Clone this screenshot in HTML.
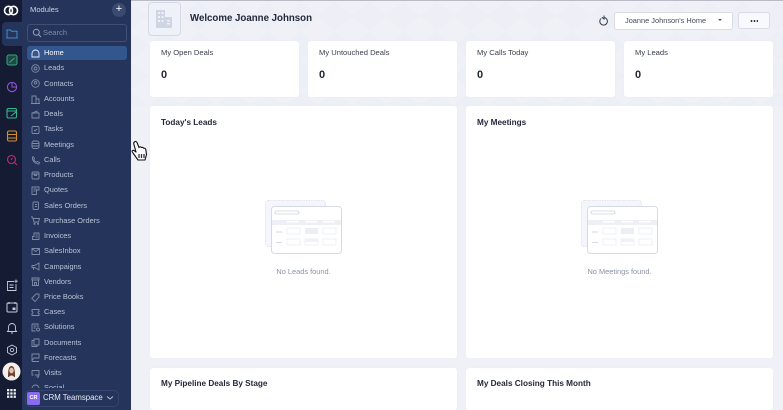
<!DOCTYPE html>
<html><head><meta charset="utf-8"><style>
*{box-sizing:border-box}
html,body{margin:0;padding:0}
html{background:#eff1f7}
body{width:783px;height:410px;overflow:hidden;position:relative;background:#eff1f7;font-family:"Liberation Sans",sans-serif;color:#1d2233;filter:blur(.35px)}
.a{position:absolute}
#rail{left:0;top:0;width:22px;height:410px;background:#141b33}
#side{left:22px;top:0;width:109px;height:410px;background:#24345a;overflow:hidden}
.it{position:absolute;left:44px;font-size:7.4px;color:#b9c2d6;white-space:nowrap;line-height:10px}
.ic{position:absolute;left:31px;width:9px;height:9px}
.ic *{fill:none;stroke:#7f8ca8;stroke-width:.9}
.card{position:absolute;background:#fff;border-radius:3px;box-shadow:0 0 1px #e6e9f1}
.t{position:absolute;font-size:7.6px;color:#3a3f4e;left:11px;top:7px;white-space:nowrap;line-height:10px}
.n{position:absolute;left:11px;top:28px;font-size:11px;font-weight:bold;color:#222736;line-height:12px}
.h{position:absolute;left:11px;top:11px;font-size:8.2px;font-weight:bold;color:#23283a;white-space:nowrap;line-height:11px}
.e{position:absolute;font-size:7.4px;color:#8a92a8;white-space:nowrap;line-height:10px;left:0;right:0;text-align:center;top:160px}
</style></head><body>
<div class="a" style="left:131px;top:0;width:652px;height:1px;background:#b9bcc4"></div>
<svg class="a" style="left:131px;top:1px" width="652" height="105"><defs><pattern id="p" width="34" height="30" patternUnits="userSpaceOnUse"><path d="M0 0L17 15L0 30ZM34 0L17 15L34 30Z" fill="#e9ecf4"/></pattern></defs><rect width="652" height="105" fill="url(#p)" opacity=".45"/></svg>
<div class="a" id="rail"></div>
<div class="a" id="side"></div>
<div class="a" style="left:2px;top:22px;width:20px;height:24px;background:#24345a;border-radius:4px 0 0 4px"></div>

<svg class="a" style="left:2px;top:3px" width="18" height="15" viewBox="0 0 18 15"><g fill="none" stroke="#fff" stroke-width="1.6"><ellipse cx="6.500" cy="7.500" rx="4" ry="4.200"/><ellipse cx="11.500" cy="7.500" rx="4" ry="4.200"/></g></svg>
<svg class="a" style="left:6px;top:28px" width="12" height="11" viewBox="0 0 12 11"><path d="M1 2h3.500l1 1.300H11V10H1Z" fill="none" stroke="#3f8fd0" stroke-width="1"/></svg>
<svg class="a" style="left:6px;top:54px" width="12" height="12" viewBox="0 0 12 12"><rect x="1" y="1" width="10" height="10" rx="2" fill="#1d4a45" stroke="#36a87e" stroke-width="1"/><path d="M3.500 8.500L8.500 4" stroke="#36a87e"/></svg>
<svg class="a" style="left:6px;top:81px" width="12" height="12" viewBox="0 0 12 12"><circle cx="6" cy="6" r="4.600" fill="none" stroke="#9450d8" stroke-width="1.100"/><path d="M6 1.500V6H10.500" fill="none" stroke="#9450d8" stroke-width="1"/></svg>
<svg class="a" style="left:6px;top:107px" width="12" height="12" viewBox="0 0 12 12"><rect x="1" y="1.500" width="9.500" height="9.500" rx="1.500" fill="none" stroke="#38b78d" stroke-width="1.100"/><path d="M1 4h9.500M5 9l5-4" stroke="#38b78d" stroke-width="1.100"/></svg>
<svg class="a" style="left:6px;top:130px" width="12" height="12" viewBox="0 0 12 12"><rect x="1.500" y="1" width="9" height="10" rx="1.500" fill="none" stroke="#cf9034" stroke-width="1.100"/><path d="M1.500 4.500h9M1.500 8h9" stroke="#cf9034" stroke-width="1"/></svg>
<svg class="a" style="left:6px;top:154px" width="12" height="12" viewBox="0 0 12 12"><circle cx="5.500" cy="5.500" r="4" fill="none" stroke="#c42f70" stroke-width="1.100"/><path d="M8.500 8.500L11 11M5 6l1.500-2" stroke="#c42f70" stroke-width="1"/></svg>

<svg class="a" style="left:6px;top:279px" width="12" height="13" viewBox="0 0 12 13"><path d="M8 2.500H1.500V11.500H10V5M3.500 6h4M3.500 8.500h4M10 .5v3.500M8.300 2.200h3.500" fill="none" stroke="#c6ccda" stroke-width=".9"/></svg>
<svg class="a" style="left:6px;top:301px" width="12" height="12" viewBox="0 0 12 12"><rect x="1" y="2" width="10" height="9" rx="1" fill="none" stroke="#c6ccda" stroke-width="1"/><path d="M3 1v2M9 1v2" stroke="#c6ccda"/><rect x="6.500" y="6.500" width="3" height="2.500" fill="#c6ccda"/></svg>
<svg class="a" style="left:6px;top:322px" width="12" height="13" viewBox="0 0 12 13"><path d="M6 1.500a3.500 3.500 0 0 0-3.500 3.500V8L1.500 9.500h9L9.500 8V5A3.500 3.500 0 0 0 6 1.500ZM5 11h2" fill="none" stroke="#c6ccda" stroke-width=".9"/></svg>
<svg class="a" style="left:6px;top:344px" width="12" height="12" viewBox="0 0 12 12"><path d="M6 1l4.500 2.500v5L6 11 1.500 8.500v-5Z" fill="none" stroke="#c6ccda" stroke-width=".9"/><circle cx="6" cy="6" r="1.700" fill="none" stroke="#c6ccda" stroke-width=".9"/></svg>
<svg class="a" style="left:2px;top:362px" width="19" height="19" viewBox="0 0 19 19"><circle cx="9.500" cy="9.500" r="9" fill="#f3efec"/><path d="M6 15c0-5 .2-11 3.500-11S13 10 13 15Z" fill="#6a4030"/><ellipse cx="9.500" cy="8.500" rx="2.200" ry="2.900" fill="#e8c2ac"/><path d="M6 17.500c.5-3 2-4 3.500-4s3 1 3.500 4Z" fill="#ece6e6"/></svg>
<svg class="a" style="left:6px;top:388px" width="11" height="11" viewBox="0 0 11 11" fill="#e6e9f1"><rect x="1" y="1" width="2.300" height="2.300"/><rect x="4.300" y="1" width="2.300" height="2.300"/><rect x="7.600" y="1" width="2.300" height="2.300"/><rect x="1" y="4.300" width="2.300" height="2.300"/><rect x="4.300" y="4.300" width="2.300" height="2.300"/><rect x="7.600" y="4.300" width="2.300" height="2.300"/><rect x="1" y="7.600" width="2.300" height="2.300"/><rect x="4.300" y="7.600" width="2.300" height="2.300"/><rect x="7.600" y="7.600" width="2.300" height="2.300"/></svg>

<div class="a" style="left:30px;top:4px;font-size:7.600px;color:#cdd3e2;line-height:11px">Modules</div>
<div class="a" style="left:112px;top:3px;width:14px;height:14px;border-radius:50%;background:#3a4a70;color:#fff;font-size:11px;line-height:13px;text-align:center">+</div>
<div class="a" style="left:27px;top:24px;width:100px;height:18px;border:1px solid #3f4f76;border-radius:3px;background:#24345a"></div>
<svg class="a" style="left:32px;top:28px" width="10" height="10" viewBox="0 0 10 10"><circle cx="4.300" cy="4.300" r="3" fill="none" stroke="#9aa4bc"/><path d="M6.500 6.500L9 9" stroke="#9aa4bc"/></svg>
<div class="a" style="left:43px;top:28px;font-size:7.600px;color:#7f8ba6;line-height:10px">Search</div>
<div class="a" style="left:27px;top:46px;width:100px;height:14px;background:#34568f;border-radius:3px"></div>

<svg class="ic" style="top:48.500px" viewBox="0 0 9 9"><path d="M1 8V4.500a3.500 3.500 0 0 1 7 0V8Z" style="stroke:#e8ecf4"/></svg>
<svg class="ic" style="top:63.500px" viewBox="0 0 9 9"><circle cx="4.500" cy="4.500" r="3.800"/><circle cx="4.500" cy="4.500" r="1.500"/></svg>
<svg class="ic" style="top:79px" viewBox="0 0 9 9"><circle cx="4.500" cy="4.500" r="3.800"/><circle cx="4.500" cy="3.800" r="1.300"/></svg>
<svg class="ic" style="top:94.500px" viewBox="0 0 9 9"><path d="M1 8.500V1h4v7.500M5 4h3v4.500M0 8.500h9"/></svg>
<svg class="ic" style="top:109.500px" viewBox="0 0 9 9"><path d="M1 3h7v5H1ZM1 3l5-2v2"/></svg>
<svg class="ic" style="top:124.500px" viewBox="0 0 9 9"><rect x="1" y="1.500" width="7" height="7" rx="1"/><path d="M3 5l1 1 2-2"/></svg>
<svg class="ic" style="top:140px" viewBox="0 0 9 9"><rect x="1" y="1" width="7" height="7.500" rx="2"/><path d="M1 3.500h7M1 6h7"/></svg>
<svg class="ic" style="top:155.500px" viewBox="0 0 9 9"><path d="M1.500 1C1 5 4 8 8 8L8.500 6.500 6.500 5.500 5.500 6.300C4.500 6 3 4.500 2.800 3.500L3.500 2.500 2.500 1Z"/></svg>
<svg class="ic" style="top:170.500px" viewBox="0 0 9 9"><rect x="1" y="1" width="7" height="7" rx="1"/><path d="M1 3h7M3.500 3v1.500h2V3"/></svg>
<svg class="ic" style="top:185.500px" viewBox="0 0 9 9"><path d="M1 1h7v3H5.500v4.500H1ZM2.500 3h3M2.500 5h2"/></svg>
<svg class="ic" style="top:201px" viewBox="0 0 9 9"><rect x="2" y="1" width="5.500" height="7.500" rx="1"/><path d="M4 3.500h2M4 5.500h2"/></svg>
<svg class="ic" style="top:216px" viewBox="0 0 9 9"><path d="M0 1h1.500L3 6h4.500L8.500 2.500H2"/><circle cx="3.500" cy="7.800" r=".6"/><circle cx="7" cy="7.800" r=".6"/></svg>
<svg class="ic" style="top:231.500px" viewBox="0 0 9 9"><path d="M3 1h5v6.500H1.500V4.500H3ZM4.500 3h2M4.500 5h2"/></svg>
<svg class="ic" style="top:246.500px" viewBox="0 0 9 9"><path d="M1 1.500h7.500v6H1ZM1 1.500l3.700 3 3.800-3"/></svg>
<svg class="ic" style="top:262px" viewBox="0 0 9 9"><path d="M1 3.500h2.500L8 1v7L3.500 5.500H1ZM2.500 5.500v2.500"/></svg>
<svg class="ic" style="top:277px" viewBox="0 0 9 9"><path d="M1 1h7v2H1ZM1.500 3v5.500h6V3M3.500 8.500V5.500h2v3"/></svg>
<svg class="ic" style="top:292.500px" viewBox="0 0 9 9"><path d="M5 1h3v3L4 8.500 .8 5.300Z"/></svg>
<svg class="ic" style="top:307.500px" viewBox="0 0 9 9"><path d="M1 1.500h7V3.500a1 1 0 0 0 0 2v2H1V5.500a1 1 0 0 0 0-2Z"/></svg>
<svg class="ic" style="top:322.500px" viewBox="0 0 9 9"><path d="M1 1h6v3M1 1v7h3.500M2.500 3h3M2.500 5h2"/><circle cx="7" cy="6.500" r="1.500"/></svg>
<svg class="ic" style="top:338px" viewBox="0 0 9 9"><path d="M3 1h5v6H3ZM3 2.500H1V8.500h5V7"/></svg>
<svg class="ic" style="top:353px" viewBox="0 0 9 9"><path d="M1 1h7v4H3L1 7.500ZM1 8.500h7"/></svg>
<svg class="ic" style="top:368.500px" viewBox="0 0 9 9"><path d="M1 1.500h7v4.500H4M1 1.500V6h1.500M5.500 7.500l1.500 1 1-2"/></svg>
<svg class="ic" style="top:383.500px" viewBox="0 0 9 9"><path d="M1 8V4.500a3.500 3.500 0 0 1 7 0V8Z"/></svg>

<div class="it" style="top:48px;color:#fff">Home</div>
<div class="it" style="top:63px">Leads</div>
<div class="it" style="top:78.500px">Contacts</div>
<div class="it" style="top:94px">Accounts</div>
<div class="it" style="top:109px">Deals</div>
<div class="it" style="top:124px">Tasks</div>
<div class="it" style="top:139.500px">Meetings</div>
<div class="it" style="top:155px">Calls</div>
<div class="it" style="top:170px">Products</div>
<div class="it" style="top:185px">Quotes</div>
<div class="it" style="top:200.500px">Sales Orders</div>
<div class="it" style="top:215.500px">Purchase Orders</div>
<div class="it" style="top:231px">Invoices</div>
<div class="it" style="top:246px">SalesInbox</div>
<div class="it" style="top:261.500px">Campaigns</div>
<div class="it" style="top:276.500px">Vendors</div>
<div class="it" style="top:292px">Price Books</div>
<div class="it" style="top:307px">Cases</div>
<div class="it" style="top:322px">Solutions</div>
<div class="it" style="top:337.500px">Documents</div>
<div class="it" style="top:352.500px">Forecasts</div>
<div class="it" style="top:368px">Visits</div>
<div class="it" style="top:383px">Social</div>

<div class="a" style="left:22px;top:388px;width:109px;height:22px;background:#24345a"></div>
<div class="a" style="left:25px;top:390px;width:94px;height:17px;border:1px solid #34446a;border-radius:5px;background:#24345a"></div>
<div class="a" style="left:27px;top:392px;width:13px;height:13px;border-radius:2px;background:#8a6bf0;color:#fff;font-size:5.500px;font-weight:bold;text-align:center;line-height:13px">CR</div>
<div class="a" style="left:43px;top:393px;font-size:7.800px;color:#e6e9f1;line-height:10px;white-space:nowrap">CRM Teamspace</div>
<svg class="a" style="left:106px;top:395px" width="8" height="6"><path d="M1 1.500l3 2.500 3-2.500" fill="none" stroke="#b9c2d6"/></svg>

<div class="a" style="left:148px;top:2px;width:33px;height:34px;border:1px solid #d3d9e6;border-radius:4px;background:#eef1f7"></div>
<svg class="a" style="left:155px;top:8px" width="20" height="22" viewBox="0 0 20 22"><path d="M1 20V2h9v18ZM10 9h7v11h-7Z" fill="#cfd5e2"/><g fill="#eef1f7"><rect x="3" y="4" width="2" height="2"/><rect x="6.500" y="4" width="2" height="2"/><rect x="3" y="8" width="2" height="2"/><rect x="6.500" y="8" width="2" height="2"/><rect x="3" y="12" width="2" height="2"/><rect x="6.500" y="12" width="2" height="2"/><rect x="12" y="12" width="3" height="1.500"/><rect x="12" y="15" width="3" height="1.500"/></g></svg>
<div class="a" style="left:190px;top:13px;font-size:9.700px;font-weight:bold;color:#23283a;line-height:12px;white-space:nowrap">Welcome Joanne Johnson</div>

<svg class="a" style="left:599px;top:15px" width="10" height="11" viewBox="0 0 10 11"><path d="M2 3.500a3.800 3.800 0 1 0 3-1M5 .5v3.500L2.800 2.300" fill="none" stroke="#3a3f4e" stroke-width="1"/></svg>
<div class="a" style="left:614px;top:12px;width:119px;height:18px;background:#fff;border:1px solid #d8dce7;border-radius:3px;font-size:7.400px;color:#454a5a;line-height:16px;padding-left:10px;white-space:nowrap">Joanne Johnson's Home</div>
<div class="a" style="left:718px;top:19px;width:0;height:0;border:2.500px solid transparent;border-top:2.500px solid #555;border-bottom:0"></div>
<div class="a" style="left:738px;top:12px;width:32px;height:17px;background:#f8f9fc;border:1px solid #d8dce7;border-radius:3px"></div>
<div class="a" style="left:750px;top:20px;width:8px;height:2px;background-image:radial-gradient(circle,#333 .9px,transparent 1px);background-size:3px 2px"></div>

<div class="card" style="left:150px;top:41px;width:149px;height:56px"><div class="t">My Open Deals</div><div class="n">0</div></div>
<div class="card" style="left:308px;top:41px;width:149px;height:56px"><div class="t">My Untouched Deals</div><div class="n">0</div></div>
<div class="card" style="left:466px;top:41px;width:149px;height:56px"><div class="t">My Calls Today</div><div class="n">0</div></div>
<div class="card" style="left:624px;top:41px;width:149px;height:56px"><div class="t">My Leads</div><div class="n">0</div></div>

<div class="card" style="left:150px;top:106px;width:307px;height:252px"><div class="h">Today's Leads</div>
<svg class="a" style="left:115px;top:94px" width="78" height="56" viewBox="0 0 78 56"><rect x=".5" y=".5" width="60" height="46" rx="3" fill="#f4f6fb" stroke="#e0e4f0" stroke-dasharray="1.500 1"/><rect x="6.500" y="6.500" width="70" height="47" rx="3" fill="#fff" stroke="#d6dae7" stroke-width="1"/><rect x="10" y="11" width="24" height="3" rx="1.500" fill="#fff" stroke="#ced3e2" stroke-width=".8"/><rect x="7" y="20" width="69" height="5" fill="#eef0f6"/><rect x="22" y="21" width="12" height="1.500" fill="#fff"/><rect x="40" y="21" width="12" height="1.500" fill="#fff"/><rect x="58" y="21" width="12" height="1.500" fill="#fff"/><rect x="11" y="31.500" width="6" height="1" fill="#d6dae6"/><rect x="11" y="42" width="6" height="1" fill="#d6dae6"/><g fill="#fff" stroke="#eceef5" stroke-width=".8"><rect x="22" y="28" width="13" height="6"/><rect x="58" y="28" width="13" height="6"/><rect x="22" y="39" width="13" height="6"/><rect x="58" y="39" width="13" height="6"/><rect x="40" y="39" width="13" height="6"/></g><rect x="40" y="28" width="13" height="6" fill="#eceef4"/><rect x="40" y="39" width="13" height="3" fill="#f0f2f6"/></svg>
<div class="e" style="top:160.500px">No Leads found.</div></div>
<div class="card" style="left:466px;top:106px;width:307px;height:252px"><div class="h">My Meetings</div>
<svg class="a" style="left:115px;top:94px" width="78" height="56" viewBox="0 0 78 56"><rect x=".5" y=".5" width="60" height="46" rx="3" fill="#f4f6fb" stroke="#e0e4f0" stroke-dasharray="1.500 1"/><rect x="6.500" y="6.500" width="70" height="47" rx="3" fill="#fff" stroke="#d6dae7" stroke-width="1"/><rect x="10" y="11" width="24" height="3" rx="1.500" fill="#fff" stroke="#ced3e2" stroke-width=".8"/><rect x="7" y="20" width="69" height="5" fill="#eef0f6"/><rect x="22" y="21" width="12" height="1.500" fill="#fff"/><rect x="40" y="21" width="12" height="1.500" fill="#fff"/><rect x="58" y="21" width="12" height="1.500" fill="#fff"/><rect x="11" y="31.500" width="6" height="1" fill="#d6dae6"/><rect x="11" y="42" width="6" height="1" fill="#d6dae6"/><g fill="#fff" stroke="#eceef5" stroke-width=".8"><rect x="22" y="28" width="13" height="6"/><rect x="58" y="28" width="13" height="6"/><rect x="22" y="39" width="13" height="6"/><rect x="58" y="39" width="13" height="6"/><rect x="40" y="39" width="13" height="6"/></g><rect x="40" y="28" width="13" height="6" fill="#eceef4"/><rect x="40" y="39" width="13" height="3" fill="#f0f2f6"/></svg>
<div class="e" style="top:160.500px">No Meetings found.</div></div>
<div class="card" style="left:150px;top:368px;width:307px;height:42px"><div class="h" style="top:10px">My Pipeline Deals By Stage</div></div>
<div class="card" style="left:466px;top:368px;width:307px;height:42px"><div class="h" style="top:10px">My Deals Closing This Month</div></div>

<svg class="a" style="left:131px;top:140px" width="18" height="22" viewBox="0 0 18 22"><path d="M3.500 2c1-1 2-.5 2.500.5l2 5 .5-.5c1-.5 1.500 0 2 .5 1-.5 1.700 0 2 .7 1-.3 2 .3 2.300 1.300l.7 5-1.500 5.500H7L2 13 1 11.500c0-1 1-1.500 2-1L5 12 2.800 4c-.3-1 0-1.500.7-2Z" fill="#fff" stroke="#111" stroke-width="1.100" stroke-linejoin="round"/><path d="M8 14v4M10.500 14v4M13 14v4" stroke="#333" stroke-width="1.300"/></svg>
</body></html>
